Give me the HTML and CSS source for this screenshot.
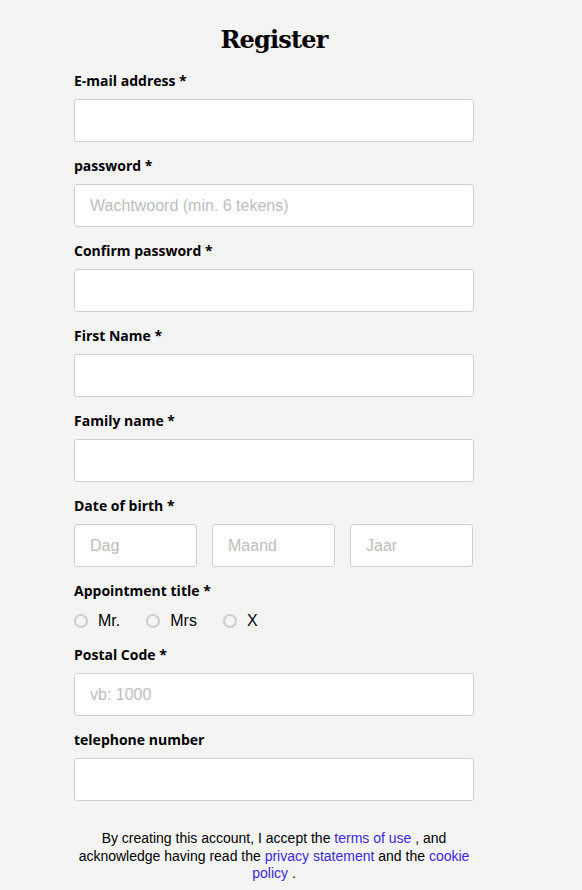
FILE: index.html
```html
<!DOCTYPE html>
<html>
<head>
<meta charset="utf-8">
<link rel="stylesheet" href="styles.css">
</head>
<body>
<main class="page">
  <h1 class="title">Register</h1>
  <form class="form">
    <div class="field">
      <label class="label">E-mail address *</label>
      <input class="input" type="text">
    </div>
    <div class="field">
      <label class="label">password *</label>
      <input class="input" type="text" placeholder="Wachtwoord (min. 6 tekens)">
    </div>
    <div class="field">
      <label class="label">Confirm password *</label>
      <input class="input" type="text">
    </div>
    <div class="field">
      <label class="label">First Name *</label>
      <input class="input" type="text">
    </div>
    <div class="field">
      <label class="label">Family name *</label>
      <input class="input" type="text">
    </div>
    <div class="field">
      <label class="label">Date of birth *</label>
      <div class="date-row">
        <input class="input" type="text" placeholder="Dag">
        <input class="input" type="text" placeholder="Maand">
        <input class="input" type="text" placeholder="Jaar">
      </div>
    </div>
    <div class="field field-radio">
      <label class="label">Appointment title *</label>
      <div class="radio-row">
        <label class="radio"><span class="dot"></span>Mr.</label>
        <label class="radio"><span class="dot"></span>Mrs</label>
        <label class="radio"><span class="dot"></span>X</label>
      </div>
    </div>
    <div class="field">
      <label class="label">Postal Code *</label>
      <input class="input" type="text" placeholder="vb: 1000">
    </div>
    <div class="field">
      <label class="label">telephone number</label>
      <input class="input" type="text">
    </div>
    <p class="terms">By creating this account, I accept the <a href="#">terms of use</a> , and acknowledge having read the <a href="#">privacy statement</a> and the <a href="#">cookie policy</a> .</p>
  </form>
</main>
</body>
</html>
```
FILE: styles.css
```css
html, body {
  margin: 0;
  padding: 0;
  background: #f4f4f4;
}
.page {
  width: 400px;
  margin: 0 0 0 74px;
  padding-top: 22px;
}
.title {
  margin: 0;
  text-align: center;
  font-family: "DejaVu Serif", serif;
  font-weight: bold;
  font-size: 24px;
  line-height: 36px;
  color: #000;
  letter-spacing: -0.8px;
}
.form {
  display: flex;
  flex-direction: column;
  margin-top: 13px;
}
.field {
  display: flex;
  flex-direction: column;
  gap: 8px;
  margin-bottom: 14px;
}
.label {
  font-family: "Open Sans", sans-serif;
  font-weight: bold;
  font-size: 14px;
  line-height: 20px;
  color: #000;
  letter-spacing: 0;
}
.input {
  box-sizing: border-box;
  width: 100%;
  height: 43px;
  margin: 0;
  border: 1px solid #cfcfcf;
  border-radius: 3px;
  background: #fff;
  padding: 0 15px;
  font-family: "Liberation Sans", Arial, sans-serif;
  font-size: 16px;
  color: #333;
  outline: none;
}
.input::placeholder {
  color: #bdbdbd;
}
.date-row {
  display: grid;
  grid-template-columns: 123px 123px 123px;
  gap: 15px;
}
.field-radio {
  gap: 10px;
  margin-bottom: 14px;
}
.radio-row {
  display: flex;
  gap: 26px;
  height: 20px;
  align-items: center;
}
.radio {
  display: flex;
  align-items: center;
  gap: 10px;
  font-family: "Liberation Sans", Arial, sans-serif;
  font-size: 16px;
  color: #000;
}
.dot {
  box-sizing: border-box;
  width: 14px;
  height: 14px;
  border: 2px solid #cccccc;
  border-radius: 50%;
  background: #f4f4f4;
}
.terms {
  margin: 15px 0 0 0;
  text-align: center;
  font-family: "Liberation Sans", Arial, sans-serif;
  font-size: 14px;
  line-height: 17.5px;
  color: #000;
}
.terms a {
  color: #3b2ae0;
  text-decoration: none;
}
```
